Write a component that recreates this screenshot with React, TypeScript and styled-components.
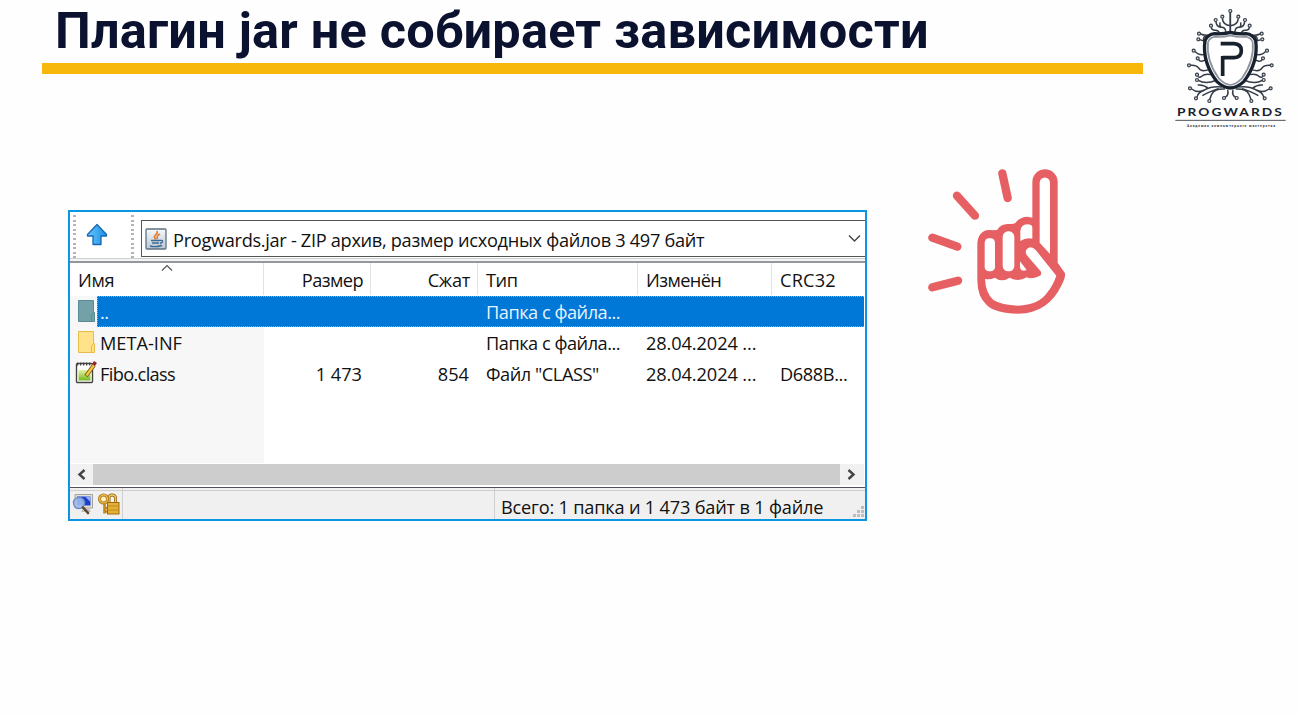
import React from "react";
import styled, { createGlobalStyle } from "styled-components";

const GlobalStyle = createGlobalStyle`
  body { margin: 0; background: #fefefe; }
  * { box-sizing: border-box; }
`;

const Slide = styled.main`
  width: 1300px;
  height: 715px;
  overflow: hidden;
  background: #fefefe;
`;

const Header = styled.header`
  display: flex;
  height: 135px;
  padding-left: 42px;
`;

const Heading = styled.div`
  width: 1101px;
  margin-right: 22px;
`;

const Title = styled.h1`
  margin: 0;
  padding: 0 0 0 13px;
  height: 63px;
  font: 700 50.5px/61px Roboto, sans-serif;
  letter-spacing: 0.2px;
  color: #0b1230;
  white-space: nowrap;
`;

const Underline = styled.div`
  height: 11px;
  background: #f7b80b;
`;

const Content = styled.section`
  display: flex;
  align-items: flex-start;
  padding: 25px 0 0 68px;
`;

const Window = styled.div`
  display: flex;
  flex-direction: column;
  width: 799px;
  height: 311px;
  margin: 50px 48px 0 0;
  border: 2px solid #0c95e0;
  background: #fff;
  font: 18.2px/30px "Open Sans", "Noto Sans", sans-serif;
  color: #111;
`;

const Toolbar = styled.div`
  display: flex;
  height: 51px;
  padding-top: 3px;
  border-bottom: 2px solid #94979c;
  background: linear-gradient(#fff 0 46px, #cfcfcf 46px 47px, #f4f4f4 47px);
`;

const Grip = styled.div<{ $left: number }>`
  width: 3px;
  height: 45px;
  margin-left: ${(p) => p.$left}px;
  background: repeating-linear-gradient(#b4b4b4 0 2px, transparent 2px 4.6px);
`;

const UpButton = styled.div`
  width: 22px;
  height: 24px;
  margin: 8px 23px 0 10px;
`;

const Combo = styled.div`
  display: flex;
  align-items: center;
  flex: 1;
  height: 37px;
  margin: 5px 0 0 7px;
  padding: 0 4px 0 3px;
  border: 1px solid #555;
  border-right: 0;
`;

const Text = styled.span<{ $spacing?: number }>`
  display: inline-block;
  letter-spacing: ${(p) => p.$spacing ?? 0}px;
  white-space: pre;
`;

const ComboLabel = styled(Text)`
  flex: 1;
  margin: 2px 0 0 6px;
`;

const List = styled.div`
  flex: 1;
  padding-right: 1px;
  background: linear-gradient(90deg, #f7f7f7 194px, #fff 194px);
`;

const Columns = styled.div`
  display: grid;
  grid-template-columns: 194px 107px 107px 160px 134px 1fr;
  height: 33px;
  background: #fff;
`;

const ColumnHead = styled.div<{ $right?: boolean; $last?: boolean; $first?: boolean }>`
  position: relative;
  height: 32px;
  padding: 2px 7px 0 8px;
  border-right: ${(p) => (p.$last ? 0 : 1)}px solid #e2e2e2;
  text-align: ${(p) => (p.$right ? "right" : "left")};
`;

const SortMark = styled.svg`
  position: absolute;
  left: 91px;
  top: 1px;
`;

const Row = styled.div<{ $selected?: boolean }>`
  display: grid;
  grid-template-columns: 27px 166px 107px 107px 160px 134px 1fr;
  grid-template-rows: 31px;
  height: ${(p) => (p.$selected ? 31 : 30.5)}px;
  color: ${(p) => (p.$selected ? "#e8f2fc" : "#111")};
  background: ${(p) => (p.$selected ? "linear-gradient(90deg, #f7f7f7 27px, #0078d7 27px)" : "none")};
`;

const SelectionBand = styled.div`
  grid-column: 2 / -1;
  grid-row: 1;
  border: 1px dotted #e39a45;
  border-right: 0;
`;

const Glyph = styled.div`
  grid-column: 1;
  grid-row: 1;
  padding-left: 5px;
`;

const Cell = styled.div<{ $col: number; $right?: boolean; $name?: boolean }>`
  grid-column: ${(p) => p.$col};
  grid-row: 1;
  padding: 1px ${(p) => (p.$right ? 8 : 0)}px 0 ${(p) => (p.$name ? 3 : 9)}px;
  text-align: ${(p) => (p.$right ? "right" : "left")};
`;

const Scrollbar = styled.div`
  display: flex;
  height: 24px;
  margin-right: 1px;
  padding: 1px 0 2px;
  background: #fff;
`;

const ScrollButton = styled.div<{ $wide?: boolean }>`
  display: flex;
  align-items: center;
  justify-content: center;
  width: ${(p) => (p.$wide ? 24 : 23)}px;
  padding-right: 1px;
  background: #f1f1f1;
`;

const Thumb = styled.div`
  flex: 1;
  background: #cdcdcd;
`;

const StatusBar = styled.div`
  display: flex;
  height: 32px;
  border-top: 1px solid #50545f;
  background: linear-gradient(#f0f0f0 2px, #cfcfcf 2px 3px, #f0f0f0 3px);
`;

const StatusIcons = styled.div`
  display: flex;
  gap: 4px;
  width: 53px;
  padding: 5px 0 0 2px;
  border-right: 1px solid #d0d0d0;
`;

const StatusTotal = styled.div`
  flex: 1;
  margin-left: 371px;
  padding: 4px 0 0 6px;
  border-left: 1px solid #d0d0d0;
`;

const SizeGrip = styled.svg`
  align-self: flex-end;
  margin: 0 0 1px 0;
`;

const branchPath =
  "M136 85V22M136 62Q114 60 112 40M122 86V78Q120 66 108 67Q94 65 93 50M108 68Q103 62 105 52M104 86Q100 73 88 76Q79 75 79 67M70 90Q58 92 47 87M60 125Q64 106 50 106L45 104M60 110Q50 98 62 93M62 148Q40 152 30 139M66 160Q48 176 40 163M80 190Q50 205 40 188Q34 180 17 181M90 212Q62 202 50 214Q42 220 38 213M95 225Q62 240 40 226M112 246Q80 242 60 254Q38 266 20 252M70 250Q56 238 38 240M60 255Q38 262 36 276M120 252Q88 250 80 268Q77 276 74 283M100 251Q70 262 52 272M128 254Q132 272 120 277";

const branchNodes = [
  [112, 35], [92, 45], [78, 62], [42, 86], [40, 103], [26, 137], [38, 160], [12, 181],
  [36, 209], [36, 225], [15, 250], [33, 280], [73, 288], [117, 279],
];

function Branches() {
  return (
    <>
      <path d={branchPath} />
      {branchNodes.map(([x, y]) => (
        <circle key={`${x}-${y}`} cx={x} cy={y} r="4.5" fill="#d8dbde" strokeWidth="3.5" />
      ))}
    </>
  );
}

function Logo() {
  return (
    <svg width="135" height="135" viewBox="0 0 405 405">
      <g fill="none" stroke="#343c47" strokeWidth="4.5">
        <g transform="translate(60 15)"><Branches /></g>
        <g transform="matrix(-1 0 0 1 332 15)"><Branches /></g>
        <circle cx="196" cy="33" r="4.500" fill="#d8dbde" strokeWidth="3.500" />
      </g>
      <path d="M196 97Q218 103 243 101Q264 103 272 122Q281 185 237 244Q217 263 196 264Q175 263 155 244Q111 185 120 122Q128 103 149 101Q174 103 196 97Z" fill="#fff" stroke="#18222e" strokeWidth="10" />
      <path d="M196 106Q220 113 241 110Q257 112 263 126Q269 183 230 236Q212 254 196 255Q180 254 162 236Q123 183 129 126Q135 112 151 110Q172 113 196 106Z" fill="none" stroke="#8b939e" strokeWidth="5" />
      <path d="M167 131H207Q229 132 229 152Q229 172 207 173H173M173 228V168" fill="none" stroke="#17212d" strokeWidth="11" />
      <text x="36" y="348" textLength="321" lengthAdjust="spacingAndGlyphs" letterSpacing="5" fontFamily="Lato, sans-serif" fontWeight="700" fontSize="33" fill="#18212c">PROGWARDS</text>
      <path d="M31 361H362" stroke="#4b525a" strokeWidth="3" />
      <text x="66" y="380" textLength="264" lengthAdjust="spacing" fontFamily="Roboto, sans-serif" fontWeight="700" fontSize="10" fill="#333b45">Академия компьютерного мастерства</text>
    </svg>
  );
}

function Hand() {
  return (
    <svg width="165" height="165" viewBox="0 0 495 495">
      <path d="M262 40L278 114M126 107L180 167M52 233L127 260M52 382L129 362" stroke="#e66063" strokeWidth="25" strokeLinecap="round" />
      <path d="M187 250Q190 212 222 210Q238 211 246 210Q258 190 282 192Q296 193 302 188Q315 170 338 170L352 173V66A38 38 0 0 1 428 66V308L450 340Q452 352 440 375Q400 460 310 461Q240 460 215 435Q187 410 187 360Z" fill="#e66063" />
      <g fill="#fff">
        <rect x="209" y="235" width="31" height="99" rx="13" />
        <rect x="263" y="214" width="35" height="120" rx="16" />
        <path d="M316 243V212Q318 194 337 193Q351 193 352 202V236Q332 232 316 243Z" />
        <path d="M374 68A15.500 15.500 0 0 1 405 68V282L374 248Z" />
        <path d="M315 304L335 330Q316 336 315 320Z" />
        <path d="M210 357Q226 360 240 353Q260 369 284 353Q310 367 335 352Q350 359 372 349Q382 345 377 334L335 285Q327 270 341 263Q352 259 362 270L424 347Q415 375 395 400Q370 435 310 437Q260 435 235 420Q212 400 210 357Z" />
      </g>
    </svg>
  );
}

function UpArrow() {
  return (
    <svg width="22" height="24" viewBox="0 0 22 24">
      <defs>
        <linearGradient id="up" x2="1"><stop stopColor="#68c6fb" /><stop offset="1" stopColor="#1c8ee8" /></linearGradient>
      </defs>
      <path d="M11 1.500L20.500 11.500V13H15V21.500H7V13H1.500V11.500Z" fill="url(#up)" stroke="#1768b4" strokeWidth="1.300" strokeLinejoin="round" />
    </svg>
  );
}

function JavaIcon() {
  return (
    <svg width="22" height="22" viewBox="0 0 22 22">
      <defs>
        <linearGradient id="jar" x2="0" y2="1"><stop stopColor="#f6f8fa" /><stop offset="1" stopColor="#b9c6d2" /></linearGradient>
      </defs>
      <rect x="1" y="1" width="20" height="20" rx="1" fill="url(#jar)" stroke="#5d7182" strokeWidth="1.300" />
      <path d="M12 3Q13 5 10.500 7Q8 9 11 11.500M15 6Q11 8 12.500 11" fill="none" stroke="#e8792b" strokeWidth="1.600" />
      <path d="M6 12.500H15M7 15H14M5 18Q10 19.500 17 17.500M15 12.500Q19 12 17 14.500L15 15.500" fill="none" stroke="#3c6b94" strokeWidth="1.400" />
    </svg>
  );
}

function FolderIcon({ selected }: { selected?: boolean }) {
  const line = selected ? "#568c93" : "#e8bd45";
  return (
    <svg width="24" height="30" viewBox="0 0 24 30">
      <path d="M3.500 4.500H18.500V16.500H19.500V25.500H3.500Z" fill={selected ? "#74a1a8" : "#ffe28a"} stroke={line} />
      <path d="M16.500 25V19L18.500 16.500" fill="none" stroke={line} />
    </svg>
  );
}

function ClassIcon() {
  return (
    <svg width="24" height="30" viewBox="0 0 24 30">
      <defs>
        <linearGradient id="note" x2="0" y2="1"><stop stopColor="#e4f5a4" /><stop offset="1" stopColor="#74b81d" /></linearGradient>
      </defs>
      <rect x="1.500" y="5.500" width="16" height="19" rx="1" fill="#fff" stroke="#444" strokeWidth="1.400" />
      <rect x="3.500" y="12" width="12" height="10.500" fill="url(#note)" />
      <path d="M2 6H16" stroke="#444" strokeWidth="3" strokeDasharray="1.300 1.700" />
      <path d="M11 18L19 7" stroke="#7c5a1a" strokeWidth="4" />
      <path d="M11.500 17.500L19 7" stroke="#f5c63c" strokeWidth="2.400" />
      <path d="M18.500 7L20.500 4" stroke="#97232b" strokeWidth="3.500" />
    </svg>
  );
}

function ComputerIcon() {
  return (
    <svg width="22" height="22" viewBox="0 0 22 22">
      <path d="M3 1.500H20.500V15H3Z" fill="#e4e0d6" stroke="#a3a29c" />
      <path d="M5 3.500H18.500V12.500H5Z" fill="#1b3ed0" />
      <path d="M13 3.500H18.500V9Z" fill="#8fb2f5" />
      <path d="M11 15H17L19 19H9Z" fill="#c4c1b7" />
      <circle cx="7" cy="10" r="5.500" fill="#9fbceb" fillOpacity=".9" stroke="#6d8fc9" strokeWidth="1.400" />
      <path d="M11 14.500L16 20" stroke="#5b4636" strokeWidth="2.600" strokeLinecap="round" />
    </svg>
  );
}

function LockIcon() {
  return (
    <svg width="22" height="22" viewBox="0 0 22 22">
      <path d="M11 10V5Q11 2 14 2Q17.500 2 17.500 5V10" fill="none" stroke="#96681a" strokeWidth="3" />
      <path d="M11 10V5Q11 2 14 2Q17.500 2 17.500 5V10" fill="none" stroke="#f0c65d" strokeWidth="1.400" />
      <rect x="9.500" y="9.500" width="11.500" height="11.500" fill="#e5b034" stroke="#9a6b12" />
      <path d="M10 13H20.500M10 17H20.500" stroke="#bd8a20" />
      <circle cx="5.500" cy="6" r="4" fill="#fff3c4" stroke="#a8741a" strokeWidth="3" />
      <circle cx="5.500" cy="6" r="4" fill="none" stroke="#eebc48" strokeWidth="1.500" />
      <path d="M6.500 10V20.500M7 15H9M7 18.500H9" stroke="#c4861b" strokeWidth="2.600" />
    </svg>
  );
}

export default function App() {
  return (
    <Slide>
      <GlobalStyle />
      <Header>
        <Heading>
          <Title>Плагин jar не собирает зависимости</Title>
          <Underline />
        </Heading>
        <Logo />
      </Header>
      <Content>
        <Window>
          <Toolbar>
            <Grip $left={3} />
            <UpButton><UpArrow /></UpButton>
            <Grip $left={0} />
            <Combo>
              <JavaIcon />
              <ComboLabel $spacing={-0.31}>Progwards.jar - ZIP архив, размер исходных файлов 3 497 байт</ComboLabel>
              <svg width="13" height="9" viewBox="0 0 13 9"><path d="M1 1.500L6.500 7L12 1.500" fill="none" stroke="#444" strokeWidth="1.400" /></svg>
            </Combo>
          </Toolbar>
          <List>
            <Columns>
              <ColumnHead>
                <SortMark width="12" height="8" viewBox="0 0 12 8"><path d="M1 6.500L6 1.500L11 6.500" fill="none" stroke="#555" strokeWidth="1.200" /></SortMark>
                <Text $spacing={-0.3}>Имя</Text>
              </ColumnHead>
              <ColumnHead $right><Text $spacing={-0.55}>Размер</Text></ColumnHead>
              <ColumnHead $right><Text $spacing={-0.3}>Сжат</Text></ColumnHead>
              <ColumnHead><Text $spacing={-0.4}>Тип</Text></ColumnHead>
              <ColumnHead><Text $spacing={-0.6}>Изменён</Text></ColumnHead>
              <ColumnHead $last><Text $spacing={0.2}>CRC32</Text></ColumnHead>
            </Columns>
            <Row $selected>
              <SelectionBand />
              <Glyph><FolderIcon selected /></Glyph>
              <Cell $col={2} $name><Text $spacing={-0.5}>..</Text></Cell>
              <Cell $col={5}><Text $spacing={-0.48}>Папка с файла...</Text></Cell>
            </Row>
            <Row>
              <Glyph><FolderIcon /></Glyph>
              <Cell $col={2} $name><Text>META-INF</Text></Cell>
              <Cell $col={5}><Text $spacing={-0.48}>Папка с файла...</Text></Cell>
              <Cell $col={6}><Text $spacing={-0.1}>28.04.2024 ...</Text></Cell>
            </Row>
            <Row>
              <Glyph><ClassIcon /></Glyph>
              <Cell $col={2} $name><Text $spacing={-0.65}>Fibo.class</Text></Cell>
              <Cell $col={3} $right><Text>1 473</Text></Cell>
              <Cell $col={4} $right><Text>854</Text></Cell>
              <Cell $col={5}><Text $spacing={-0.45}>Файл "CLASS"</Text></Cell>
              <Cell $col={6}><Text $spacing={-0.1}>28.04.2024 ...</Text></Cell>
              <Cell $col={7}><Text $spacing={-0.4}>D688B...</Text></Cell>
            </Row>
          </List>
          <Scrollbar>
            <ScrollButton><svg width="9" height="11" viewBox="0 0 9 11"><path d="M7.500 1L2.500 5.500L7.500 10" fill="none" stroke="#444" strokeWidth="2.400" /></svg></ScrollButton>
            <Thumb />
            <ScrollButton $wide><svg width="9" height="11" viewBox="0 0 9 11"><path d="M1.500 1L6.500 5.500L1.500 10" fill="none" stroke="#444" strokeWidth="2.400" /></svg></ScrollButton>
          </Scrollbar>
          <StatusBar>
            <StatusIcons><ComputerIcon /><LockIcon /></StatusIcons>
            <StatusTotal><Text $spacing={-0.2}>Всего: 1 папка и 1 473 байт в 1 файле</Text></StatusTotal>
            <SizeGrip width="12" height="12" viewBox="0 0 12 12"><path d="M8 0h3v3h-3zM4 4h3v3h-3zM8 4h3v3h-3zM0 8h3v3h-3zM4 8h3v3h-3zM8 8h3v3h-3z" fill="#bdbdbd" /></SizeGrip>
          </StatusBar>
        </Window>
        <Hand />
      </Content>
    </Slide>
  );
}
